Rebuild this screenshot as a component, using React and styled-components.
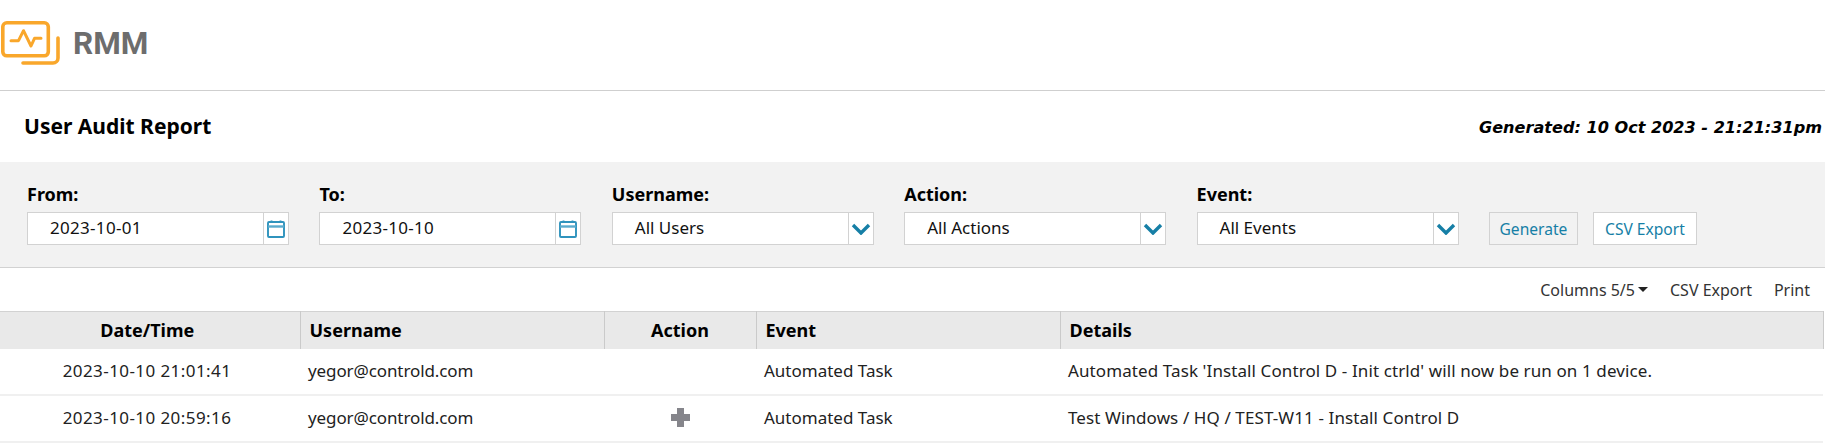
import React from 'react';
import styled, { createGlobalStyle } from 'styled-components';

const filters = [
  { label: 'From:', value: '2023-10-01', type: 'date' },
  { label: 'To:', value: '2023-10-10', type: 'date' },
  { label: 'Username:', value: 'All Users', type: 'select' },
  { label: 'Action:', value: 'All Actions', type: 'select' },
  { label: 'Event:', value: 'All Events', type: 'select' },
];

const columns = [
  { title: 'Date/Time', width: 300, align: 'center' },
  { title: 'Username', width: 304, align: 'left' },
  { title: 'Action', width: 152, align: 'center' },
  { title: 'Event', width: 304, align: 'left' },
  { title: 'Details', width: 763, align: 'left' },
];

const rows = [
  {
    time: '2023-10-10 21:01:41',
    user: 'yegor@controld.com',
    added: false,
    event: 'Automated Task',
    details: "Automated Task 'Install Control D - Init ctrld' will now be run on 1 device.",
  },
  {
    time: '2023-10-10 20:59:16',
    user: 'yegor@controld.com',
    added: true,
    event: 'Automated Task',
    details: 'Test Windows / HQ / TEST-W11 - Install Control D',
  },
];

function LogoIcon() {
  return (
    <svg width="60" height="46" viewBox="0 0 60 46" fill="none" stroke="#f9a72b" strokeWidth="3.6" strokeLinecap="round" strokeLinejoin="round">
      <rect x="2.8" y="2.8" width="45.5" height="33" rx="4" />
      <path d="M23 43h30a5 5 0 0 0 5-5V18" />
      <path d="M11 20.7h7.5l5-10 7.5 15.3 3.5-7.7h6.5" strokeWidth="3" />
    </svg>
  );
}

function CalendarIcon() {
  return (
    <svg width="18" height="18" viewBox="0 0 18 18" fill="none" stroke="#2f93bd" strokeWidth="1.9">
      <rect x="1" y="2" width="16" height="15" rx="1" />
      <path d="M1 6.5h16" strokeWidth="2.4" stroke="#5aabcd" />
      <path d="M4.5 0.5v2M13.5 0.5v2" />
    </svg>
  );
}

function ChevronIcon() {
  return (
    <svg width="20" height="12" viewBox="0 0 20 12" fill="none" stroke="#167fa6" strokeWidth="3.4">
      <path d="M2 2l8 8 8-8" />
    </svg>
  );
}

function PlusIcon() {
  return (
    <svg width="19" height="19" viewBox="0 0 19 19" fill="#85858b">
      <path d="M6 0h7v6h6v7h-6v6H6v-6H0V6h6z" />
    </svg>
  );
}

export default function App() {
  return (
    <Page>
      <GlobalStyle />
      <Brand>
        <LogoIcon />
        <BrandName>RMM</BrandName>
      </Brand>
      <TitleRow>
        <Title>User Audit Report</Title>
        <Generated>Generated: 10 Oct 2023 - 21:21:31pm</Generated>
      </TitleRow>
      <FilterBar>
        {filters.map((filter) => (
          <Field key={filter.label}>
            <FieldLabel>{filter.label}</FieldLabel>
            <InputBox>
              <InputValue $date={filter.type === 'date'}>{filter.value}</InputValue>
              <InputAddon>
                {filter.type === 'date' ? <CalendarIcon /> : <ChevronIcon />}
              </InputAddon>
            </InputBox>
          </Field>
        ))}
        <Buttons>
          <ActionButton $muted $width={89}>Generate</ActionButton>
          <ActionButton $width={104}>CSV Export</ActionButton>
        </Buttons>
      </FilterBar>
      <TableTools>
        <ToolLink>
          Columns 5/5
          <Caret />
        </ToolLink>
        <ToolLink>CSV Export</ToolLink>
        <ToolLink>Print</ToolLink>
      </TableTools>
      <Table>
        <colgroup>
          {columns.map((col) => (
            <col key={col.title} width={col.width} />
          ))}
        </colgroup>
        <thead>
          <tr>
            {columns.map((col) => (
              <HeadCell key={col.title} $align={col.align}>
                {col.title}
              </HeadCell>
            ))}
          </tr>
        </thead>
        <tbody>
          {rows.map((row) => (
            <tr key={row.time}>
              <Cell $align="center" $tracking="0.42px">{row.time}</Cell>
              <Cell $tracking="-0.1px">{row.user}</Cell>
              <Cell $align="center">{row.added && <PlusIcon />}</Cell>
              <Cell>{row.event}</Cell>
              <Cell $tracking="0.1px">{row.details}</Cell>
            </tr>
          ))}
        </tbody>
      </Table>
    </Page>
  );
}

const GlobalStyle = createGlobalStyle`
  html, body {
    margin: 0;
    background: #fff;
  }
  body {
    font-family: "Noto Sans", "Open Sans", sans-serif;
    color: #1c1c1c;
  }
`;

const Page = styled.div`
  width: 1825px;
  height: 447px;
  overflow: hidden;
`;

const Brand = styled.header`
  height: 90px;
  display: flex;
  align-items: flex-start;
  gap: 13px;
  border-bottom: 1px solid #cfcfcf;
  svg {
    margin-top: 20px;
  }
`;

const BrandName = styled.span`
  margin-top: 25px;
  font-family: Roboto, sans-serif;
  font-size: 31.5px;
  line-height: 37px;
  font-weight: 700;
  color: #6d6d6d;
`;

const TitleRow = styled.div`
  height: 71px;
  display: flex;
  align-items: center;
  justify-content: space-between;
  padding: 0 3px 2px 24px;
  box-sizing: border-box;
`;

const Title = styled.h1`
  margin: 0;
  font-size: 21px;
  font-weight: 700;
  color: #000;
`;

const Generated = styled.div`
  margin-top: 4px;
  font-family: "DejaVu Sans", sans-serif;
  font-size: 16.1px;
  font-weight: 700;
  font-style: italic;
  color: #000;
`;

const FilterBar = styled.section`
  height: 106px;
  box-sizing: border-box;
  display: flex;
  align-items: flex-start;
  gap: 30.4px;
  padding: 19px 0 0 27px;
  background: #f2f2f2;
  border-bottom: 1px solid #d2d2d2;
`;

const Field = styled.div`
  width: 262px;
`;

const FieldLabel = styled.label`
  display: block;
  height: 31px;
  padding-top: 1px;
  box-sizing: border-box;
  font-size: 18px;
  line-height: 24px;
  font-weight: 700;
  color: #000;
`;

const InputBox = styled.div`
  height: 33px;
  box-sizing: border-box;
  display: flex;
  background: #fff;
  border: 1px solid #d2d2d2;
`;

const InputValue = styled.div`
  flex: 1;
  padding-left: 22px;
  font-size: 17px;
  line-height: 30px;
  color: #111;
  letter-spacing: ${(p) => (p.$date ? '0.3px' : 'normal')};
`;

const InputAddon = styled.div`
  width: 24px;
  display: flex;
  align-items: center;
  justify-content: center;
  border-left: 1px solid #d2d2d2;
`;

const Buttons = styled.div`
  display: flex;
  gap: 15px;
  margin-top: 31px;
`;

const ActionButton = styled.button`
  width: ${(p) => p.$width}px;
  height: 33px;
  padding: 0;
  background: ${(p) => (p.$muted ? '#f2f2f2' : '#fff')};
  border: 1px solid #d2d2d2;
  font-family: inherit;
  font-size: 15.6px;
  color: #167fa6;
`;

const TableTools = styled.div`
  height: 43px;
  display: flex;
  align-items: center;
  justify-content: flex-end;
  gap: 22px;
  padding-right: 15px;
`;

const ToolLink = styled.span`
  display: flex;
  align-items: center;
  gap: 3px;
  font-size: 16px;
  color: #333;
`;

const Caret = styled.i`
  width: 0;
  height: 0;
  border-left: 5px solid transparent;
  border-right: 5px solid transparent;
  border-top: 5px solid #222;
`;

const Table = styled.table`
  width: 1823px;
  table-layout: fixed;
  border-collapse: collapse;
  border-top: 1px solid #d2d2d2;
`;

const HeadCell = styled.th`
  height: 36px;
  padding: 0 9px 1px;
  background: #e9e9e9;
  border-right: 1px solid #cacaca;
  font-size: 18px;
  font-weight: 700;
  color: #000;
  text-align: ${(p) => p.$align};
  &:first-child {
    padding-right: 14px;
  }
`;

const Cell = styled.td`
  height: 42px;
  padding: 0 8px 3px;
  border-bottom: 2px solid #f0f0f0;
  font-size: 17px;
  letter-spacing: ${(p) => p.$tracking || 'normal'};
  color: #222;
  text-align: ${(p) => p.$align || 'left'};
  &:first-child {
    padding-right: 14px;
  }
  svg {
    display: block;
    margin: 0 auto;
  }
`;
